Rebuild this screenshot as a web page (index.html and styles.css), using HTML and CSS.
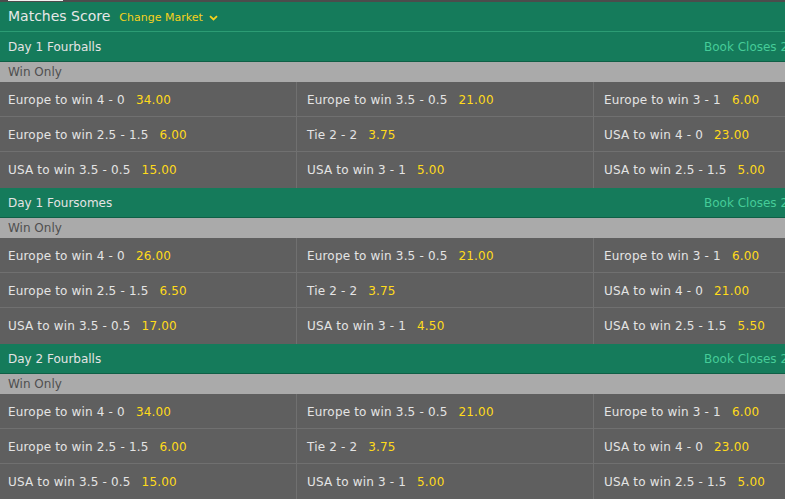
FILE: index.html
```html
<!DOCTYPE html>
<html>
<head>
<meta charset="utf-8">
<link rel="stylesheet" href="styles.css">
</head>
<body>
<div class="board">
  <div class="topbar"><div class="tab"></div></div>
  <div class="market-head">
    <span class="market-title">Matches Score</span>
    <span class="change">Change Market
      <svg class="chev" width="9" height="6" viewBox="0 0 9 6"><path d="M1 1.2 L4.5 4.5 L8 1.2" fill="none" stroke="#f5d21c" stroke-width="1.8"/></svg>
    </span>
  </div>

  <div class="section">
    <div class="section-head"><span class="section-title">Day 1 Fourballs</span><span class="closes">Book Closes 25/09 08:35</span></div>
    <div class="sub">Win Only</div>
    <div class="grid">
      <div class="cell"><span class="lbl">Europe to win 4 - 0</span><span class="odds">34.00</span></div>
      <div class="cell"><span class="lbl">Europe to win 3.5 - 0.5</span><span class="odds">21.00</span></div>
      <div class="cell"><span class="lbl">Europe to win 3 - 1</span><span class="odds">6.00</span></div>
      <div class="cell"><span class="lbl">Europe to win 2.5 - 1.5</span><span class="odds">6.00</span></div>
      <div class="cell"><span class="lbl">Tie 2 - 2</span><span class="odds">3.75</span></div>
      <div class="cell"><span class="lbl">USA to win 4 - 0</span><span class="odds">23.00</span></div>
      <div class="cell"><span class="lbl">USA to win 3.5 - 0.5</span><span class="odds">15.00</span></div>
      <div class="cell"><span class="lbl">USA to win 3 - 1</span><span class="odds">5.00</span></div>
      <div class="cell"><span class="lbl">USA to win 2.5 - 1.5</span><span class="odds">5.00</span></div>
    </div>
  </div>

  <div class="section">
    <div class="section-head"><span class="section-title">Day 1 Foursomes</span><span class="closes">Book Closes 25/09 13:10</span></div>
    <div class="sub">Win Only</div>
    <div class="grid">
      <div class="cell"><span class="lbl">Europe to win 4 - 0</span><span class="odds">26.00</span></div>
      <div class="cell"><span class="lbl">Europe to win 3.5 - 0.5</span><span class="odds">21.00</span></div>
      <div class="cell"><span class="lbl">Europe to win 3 - 1</span><span class="odds">6.00</span></div>
      <div class="cell"><span class="lbl">Europe to win 2.5 - 1.5</span><span class="odds">6.50</span></div>
      <div class="cell"><span class="lbl">Tie 2 - 2</span><span class="odds">3.75</span></div>
      <div class="cell"><span class="lbl">USA to win 4 - 0</span><span class="odds">21.00</span></div>
      <div class="cell"><span class="lbl">USA to win 3.5 - 0.5</span><span class="odds">17.00</span></div>
      <div class="cell"><span class="lbl">USA to win 3 - 1</span><span class="odds">4.50</span></div>
      <div class="cell"><span class="lbl">USA to win 2.5 - 1.5</span><span class="odds">5.50</span></div>
    </div>
  </div>

  <div class="section">
    <div class="section-head"><span class="section-title">Day 2 Fourballs</span><span class="closes">Book Closes 26/09 08:35</span></div>
    <div class="sub">Win Only</div>
    <div class="grid">
      <div class="cell"><span class="lbl">Europe to win 4 - 0</span><span class="odds">34.00</span></div>
      <div class="cell"><span class="lbl">Europe to win 3.5 - 0.5</span><span class="odds">21.00</span></div>
      <div class="cell"><span class="lbl">Europe to win 3 - 1</span><span class="odds">6.00</span></div>
      <div class="cell"><span class="lbl">Europe to win 2.5 - 1.5</span><span class="odds">6.00</span></div>
      <div class="cell"><span class="lbl">Tie 2 - 2</span><span class="odds">3.75</span></div>
      <div class="cell"><span class="lbl">USA to win 4 - 0</span><span class="odds">23.00</span></div>
      <div class="cell"><span class="lbl">USA to win 3.5 - 0.5</span><span class="odds">15.00</span></div>
      <div class="cell"><span class="lbl">USA to win 3 - 1</span><span class="odds">5.00</span></div>
      <div class="cell"><span class="lbl">USA to win 2.5 - 1.5</span><span class="odds">5.00</span></div>
    </div>
  </div>
</div>
</body>
</html>
```
FILE: styles.css
```css
html, body {
  margin: 0;
  padding: 0;
  overflow: hidden;
  background: #5f5f5f;
}
body {
  font-family: "DejaVu Sans", Verdana, sans-serif;
  font-size: 12px;
  color: #e4e4e4;
}
.board {
  width: 891px;
}
.topbar {
  height: 2px;
  background: #4c4c4c;
  display: flex;
}
.tab {
  margin-left: 8px;
  width: 55px;
  height: 1px;
  background: #f2f2f2;
}
.market-head {
  box-sizing: border-box;
  height: 30px;
  padding: 6px 8px 0 8px;
  background: #157b5b;
  border-bottom: 1px solid #2c9c74;
  display: flex;
  align-items: baseline;
}
.market-title {
  font-size: 14px;
  color: #e8e8e8;
}
.change {
  margin-left: 9px;
  font-size: 11px;
  color: #f5d21c;
  display: inline-flex;
  align-items: baseline;
}
.chev {
  margin-left: 6px;
}
.section-head {
  box-sizing: border-box;
  height: 30px;
  padding: 0 0 0 8px;
  background: #157b5b;
  border-bottom: 1px solid #0f5f46;
  display: flex;
  align-items: center;
}
.section-title {
  flex: 1;
  color: #e4e4e4;
}
.closes {
  width: 187px;
  color: #45cc98;
  white-space: nowrap;
}
.sub {
  height: 20px;
  line-height: 20px;
  padding-left: 8px;
  background: #aaaaaa;
  color: #4f4f4f;
}
.grid {
  display: grid;
  grid-template-columns: 297px 297px 297px;
}
.cell {
  box-sizing: border-box;
  height: 35px;
  padding-left: 10px;
  padding-top: 2px;
  display: flex;
  align-items: center;
  border-bottom: 1px solid #707070;
  border-right: 1px solid #707070;
  white-space: nowrap;
  letter-spacing: 0.17px;
}
.cell:nth-child(3n+1) {
  padding-left: 8px;
}
.cell:nth-child(3n) {
  border-right: none;
}
.cell:nth-last-child(-n+3) {
  height: 36px;
  padding-top: 0;
  border-bottom: none;
}
.odds {
  margin-left: 11px;
  color: #ffdb1a;
}
```
